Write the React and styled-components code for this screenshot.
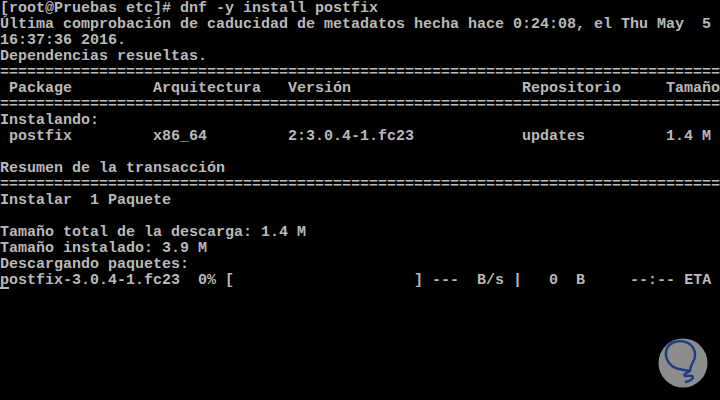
import React from 'react';
import styled, { createGlobalStyle } from 'styled-components';

const GlobalStyle = createGlobalStyle`
  html, body {
    margin: 0;
    padding: 0;
    background: #000;
  }
`;

const Screen = styled.div`
  position: relative;
  box-sizing: border-box;
  width: 720px;
  height: 400px;
  padding-top: 1px;
  overflow: hidden;
  background: #000;
  color: #b9b9b9;
  font-family: 'Liberation Mono', 'DejaVu Sans Mono', monospace;
  font-size: 15px;
  font-weight: bold;
  line-height: 16px;
  display: flex;
  flex-direction: column;
`;

const Line = styled.div`
  height: 16px;
  flex-shrink: 0;
  white-space: pre;
`;

const Cursor = styled.span`
  box-shadow: inset 0 -2px 0 #b9b9b9;
`;

const Badge = styled.div`
  position: absolute;
  left: 658px;
  top: 338px;
  width: 50px;
  height: 50px;
`;

const RULE = '='.repeat(80);

const lines = [
  '[root@Pruebas etc]# dnf -y install postfix',
  'Última comprobación de caducidad de metadatos hecha hace 0:24:08, el Thu May  5',
  '16:37:36 2016.',
  'Dependencias resueltas.',
  RULE,
  ' Package         Arquitectura   Versión                   Repositorio     Tamaño',
  RULE,
  'Instalando:',
  ' postfix         x86_64         2:3.0.4-1.fc23            updates         1.4 M',
  '',
  'Resumen de la transacción',
  RULE,
  'Instalar  1 Paquete',
  '',
  'Tamaño total de la descarga: 1.4 M',
  'Tamaño instalado: 3.9 M',
  'Descargando paquetes:',
];

const progressTail =
  'ostfix-3.0.4-1.fc23  0% [                    ] ---  B/s |   0  B     --:-- ETA';

const Logo = () => (
  <svg width="50" height="50" viewBox="0 0 50 50">
    <circle cx="25" cy="25" r="24.5" fill="#8c8c8c" />
    <path
      d="M14 28 C9 24 6 17 9 10 C12 4 22 1 30 5 C37 9 39 17 35 24 C33 28 32 31 32 33
         M14 28 C18 31 24 32 32 33 C28 35 25 37 27 38 C31 38 35 37 35 39 C35 42 31 43 28 44"
      fill="none"
      stroke="#1d3b86"
      strokeWidth="2.4"
      strokeLinecap="round"
      strokeLinejoin="round"
    />
  </svg>
);

export default function App() {
  return (
    <>
      <GlobalStyle />
      <Screen>
        {lines.map((text, i) => (
          <Line key={i}>{text}</Line>
        ))}
        <Line>
          <Cursor>p</Cursor>
          {progressTail}
        </Line>
        <Badge>
          <Logo />
        </Badge>
      </Screen>
    </>
  );
}
